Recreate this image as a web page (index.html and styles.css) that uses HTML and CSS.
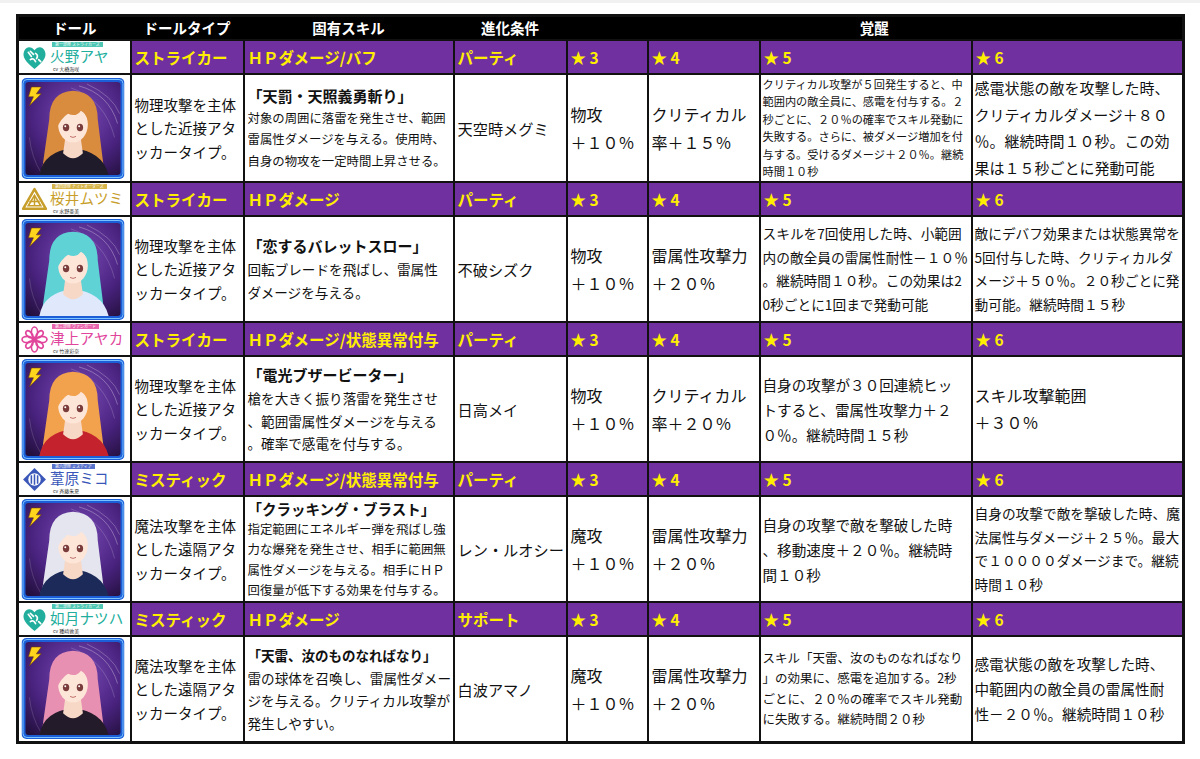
FILE: index.html
```html
<!DOCTYPE html>
<html lang="ja">
<head>
<meta charset="utf-8">
<title>ドール一覧</title>
<link rel="stylesheet" href="styles.css">
</head>
<body>
<div class="topbar"></div>
<svg class="defs" width="0" height="0" aria-hidden="true">
  <defs>
    <radialGradient id="bgGrad" cx="0.55" cy="0.35" r="0.8">
      <stop offset="0" stop-color="#7b4cb8"/>
      <stop offset="0.6" stop-color="#4a2380"/>
      <stop offset="1" stop-color="#24103f"/>
    </radialGradient>
    <symbol id="portrait" viewBox="0 0 104 102">
      <rect x="0" y="0" width="104" height="102" rx="5" fill="#1b5ed8"/>
      <rect x="1.5" y="1.5" width="101" height="99" rx="4" fill="none" stroke="#7cc4ff" stroke-width="1"/>
      <rect x="4" y="4" width="96" height="94" rx="3" fill="url(#bgGrad)"/>
      <path d="M58 8 Q88 16 97 46" stroke="#ffffff" stroke-opacity=".3" fill="none"/>
      <path d="M66 6 Q92 18 99 36" stroke="#ffffff" stroke-opacity=".25" fill="none"/>
      <path d="M50 10 Q84 22 94 60" stroke="#ffffff" stroke-opacity=".18" fill="none"/>
      <path d="M8 60 Q10 80 20 96" stroke="#ffffff" stroke-opacity=".15" fill="none"/>
      <path fill="currentColor" d="M28 42 Q28 14 52 13 Q77 14 77 42 L84 98 L20 98 Z"/>
      <path d="M18 98 Q22 74 52 71 Q82 74 88 98 Z"/>
      <path d="M44 62 L60 62 L62 76 Q52 86 42 76 Z" fill="#f7d8c6"/>
      <ellipse cx="52" cy="47" rx="15" ry="18" fill="#fde6d8"/>
      <ellipse cx="45" cy="50" rx="3.2" ry="3.8" fill="#7a3b3b"/>
      <ellipse cx="59" cy="50" rx="3.2" ry="3.8" fill="#7a3b3b"/>
      <circle cx="44.2" cy="48.8" r="1" fill="#ffffff"/>
      <circle cx="58.2" cy="48.8" r="1" fill="#ffffff"/>
      <path d="M49 59 Q52 61 55 59" stroke="#c0706a" stroke-width="1" fill="none"/>
      <path fill="currentColor" d="M35 52 Q31 20 52 19 Q74 20 70 52 Q67 36 60 33 Q55 40 47 36 Q40 40 35 52 Z"/>
      <path d="M10 9 L20 9 L15 16 L20 16 L8 28 L12 19 L7 19 Z" fill="#ffd41c" stroke="#6b3a00" stroke-width=".6"/>
    </symbol>
  </defs>
</svg>

<table class="dolls">
  <colgroup>
    <col class="c-doll"><col class="c-type"><col class="c-skill"><col class="c-evo">
    <col class="c-s3"><col class="c-s4"><col class="c-s5"><col class="c-s6">
  </colgroup>
  <thead>
    <tr class="hdr">
      <th>ドール</th><th>ドールタイプ</th><th>固有スキル</th><th>進化条件</th><th colspan="4">覚醒</th>
    </tr>
  </thead>
  <tbody>
    <!-- 1 火野アヤ -->
    <tr class="namerow">
      <td class="name-cell">
        <div class="tag teal">
          <svg class="logo" viewBox="0 0 26 26"><path d="M13 24 C4 17 1 12 3 7 C5 2 10 2 13 6 C16 2 21 2 23 7 C25 12 22 17 13 24 Z" fill="currentColor"/><path d="M7 8 L10 12 M9 7 L12 10 M14 9 Q17 11 15 14 M9 15 Q12 13 14 17 M17 15 L19 17" stroke="#fff" stroke-width="1.6" fill="none" stroke-linecap="round"/></svg>
          <div class="tag-text"><span class="unit">第一部隊 ストライカーズ</span><span class="doll">火野アヤ</span><span class="cv">cv 大橋海咲</span></div>
        </div>
      </td>
      <td>ストライカー</td><td>ＨＰダメージ/バフ</td><td>パーティ</td>
      <td>★ 3</td><td>★ 4</td><td>★ 5</td><td>★ 6</td>
    </tr>
    <tr class="bodyrow">
      <td class="pic"><svg class="portrait p1" viewBox="0 0 104 102"><use href="#portrait"/></svg></td>
      <td class="typedesc">物理攻撃を主体<br>とした近接アタ<br>ッカータイプ。</td>
      <td class="skill"><div class="title">「天罰・天照義勇斬り」</div><div class="desc d-sm">対象の周囲に落雷を発生させ、範囲<br>雷属性ダメージを与える。使用時、<br>自身の物攻を一定時間上昇させる。</div></td>
      <td class="evo">天空時メグミ</td>
      <td class="stat">物攻<br>＋１０％</td>
      <td class="stat">クリティカル<br>率＋１５％</td>
      <td class="awk a11">クリティカル攻撃が５回発生すると、中<br>範囲内の敵全員に、感電を付与する。２<br>秒ごとに、２０％の確率でスキル発動に<br>失敗する。さらに、被ダメージ増加を付<br>与する。受けるダメージ＋２０％。継続<br>時間１０秒</td>
      <td class="awk a15">感電状態の敵を攻撃した時、<br>クリティカルダメージ＋８０<br>％。継続時間１０秒。この効<br>果は１５秒ごとに発動可能</td>
    </tr>

    <!-- 2 桜井ムツミ -->
    <tr class="namerow">
      <td class="name-cell">
        <div class="tag gold">
          <svg class="logo" viewBox="0 0 26 26"><path d="M13 3 L24 22 L2 22 Z" fill="none" stroke="currentColor" stroke-width="2.4" stroke-linejoin="round"/><path d="M13 9 L19 19 L7 19 Z" fill="none" stroke="currentColor" stroke-width="1.6"/><path d="M13 9 L13 19 M8 15 L18 15" stroke="currentColor" stroke-width="1.4"/></svg>
          <div class="tag-text"><span class="unit">第四部隊 ナイトオーダーズ</span><span class="doll">桜井ムツミ</span><span class="cv">cv 水野亜美</span></div>
        </div>
      </td>
      <td>ストライカー</td><td>ＨＰダメージ</td><td>パーティ</td>
      <td>★ 3</td><td>★ 4</td><td>★ 5</td><td>★ 6</td>
    </tr>
    <tr class="bodyrow">
      <td class="pic"><svg class="portrait p2" viewBox="0 0 104 102"><use href="#portrait"/></svg></td>
      <td class="typedesc">物理攻撃を主体<br>とした近接アタ<br>ッカータイプ。</td>
      <td class="skill"><div class="title">「恋するバレットスロー」</div><div class="desc d-md">回転ブレードを飛ばし、雷属性<br>ダメージを与える。</div></td>
      <td class="evo">不破シズク</td>
      <td class="stat">物攻<br>＋１０％</td>
      <td class="stat">雷属性攻撃力<br>＋２０％</td>
      <td class="awk a13">スキルを7回使用した時、小範囲<br>内の敵全員の雷属性耐性－１０％<br>。継続時間１０秒。この効果は2<br>0秒ごとに1回まで発動可能</td>
      <td class="awk a13">敵にデバフ効果または状態異常を<br>5回付与した時、クリティカルダ<br>メージ＋５０％。２０秒ごとに発<br>動可能。継続時間１５秒</td>
    </tr>

    <!-- 3 津上アヤカ -->
    <tr class="namerow">
      <td class="name-cell">
        <div class="tag pink">
          <svg class="logo" viewBox="0 0 26 26"><g fill="none" stroke="currentColor" stroke-width="1.6"><ellipse cx="13" cy="6" rx="3" ry="5"/><ellipse cx="13" cy="20" rx="3" ry="5"/><ellipse cx="6" cy="13" rx="5" ry="3"/><ellipse cx="20" cy="13" rx="5" ry="3"/><ellipse cx="8" cy="8" rx="2.4" ry="4" transform="rotate(-45 8 8)"/><ellipse cx="18" cy="18" rx="2.4" ry="4" transform="rotate(-45 18 18)"/><ellipse cx="18" cy="8" rx="2.4" ry="4" transform="rotate(45 18 8)"/><ellipse cx="8" cy="18" rx="2.4" ry="4" transform="rotate(45 8 18)"/></g><circle cx="13" cy="13" r="2.5" fill="currentColor"/></svg>
          <div class="tag-text"><span class="unit">第三部隊 ヴァンガード</span><span class="doll">津上アヤカ</span><span class="cv">cv 竹達彩奈</span></div>
        </div>
      </td>
      <td>ストライカー</td><td>ＨＰダメージ/状態異常付与</td><td>パーティ</td>
      <td>★ 3</td><td>★ 4</td><td>★ 5</td><td>★ 6</td>
    </tr>
    <tr class="bodyrow">
      <td class="pic"><svg class="portrait p3" viewBox="0 0 104 102"><use href="#portrait"/></svg></td>
      <td class="typedesc">物理攻撃を主体<br>とした近接アタ<br>ッカータイプ。</td>
      <td class="skill"><div class="title">「電光ブザービーター」</div><div class="desc d-md">槍を大きく振り落雷を発生させ<br>、範囲雷属性ダメージを与える<br>。確率で感電を付与する。</div></td>
      <td class="evo">日高メイ</td>
      <td class="stat">物攻<br>＋１０％</td>
      <td class="stat">クリティカル<br>率＋２０％</td>
      <td class="awk a14">自身の攻撃が３０回連続ヒッ<br>トすると、雷属性攻撃力＋２<br>０％。継続時間１５秒</td>
      <td class="awk a16">スキル攻撃範囲<br>＋３０％</td>
    </tr>

    <!-- 4 葦原ミコ -->
    <tr class="namerow">
      <td class="name-cell">
        <div class="tag blue">
          <svg class="logo" viewBox="0 0 26 26"><path d="M13 2 L24 13 L13 24 L2 13 Z" fill="currentColor"/><circle cx="13" cy="13" r="6" fill="#fff"/><path d="M10 9 L10 17 M13 8 L13 18 M16 9 L16 17" stroke="currentColor" stroke-width="1.5"/></svg>
          <div class="tag-text"><span class="unit">第六部隊 ミスティア</span><span class="doll">葦原ミコ</span><span class="cv">cv 斉藤朱夏</span></div>
        </div>
      </td>
      <td>ミスティック</td><td>ＨＰダメージ/状態異常付与</td><td>パーティ</td>
      <td>★ 3</td><td>★ 4</td><td>★ 5</td><td>★ 6</td>
    </tr>
    <tr class="bodyrow">
      <td class="pic"><svg class="portrait p4" viewBox="0 0 104 102"><use href="#portrait"/></svg></td>
      <td class="typedesc">魔法攻撃を主体<br>とした遠隔アタ<br>ッカータイプ。</td>
      <td class="skill"><div class="title t-md">「クラッキング・ブラスト」</div><div class="desc d-xs">指定範囲にエネルギー弾を飛ばし強<br>力な爆発を発生させ、相手に範囲無<br>属性ダメージを与える。相手にＨＰ<br>回復量が低下する効果を付与する。</div></td>
      <td class="evo">レン・ルオシー</td>
      <td class="stat">魔攻<br>＋１０％</td>
      <td class="stat">雷属性攻撃力<br>＋２０％</td>
      <td class="awk a14">自身の攻撃で敵を撃破した時<br>、移動速度＋２０％。継続時<br>間１０秒</td>
      <td class="awk a13">自身の攻撃で敵を撃破した時、魔<br>法属性与ダメージ＋２５％。最大<br>で１００００ダメージまで。継続<br>時間１０秒</td>
    </tr>

    <!-- 5 如月ナツハ -->
    <tr class="namerow">
      <td class="name-cell">
        <div class="tag teal">
          <svg class="logo" viewBox="0 0 26 26"><path d="M13 24 C4 17 1 12 3 7 C5 2 10 2 13 6 C16 2 21 2 23 7 C25 12 22 17 13 24 Z" fill="currentColor"/><path d="M7 8 L10 12 M9 7 L12 10 M14 9 Q17 11 15 14 M9 15 Q12 13 14 17 M17 15 L19 17" stroke="#fff" stroke-width="1.6" fill="none" stroke-linecap="round"/></svg>
          <div class="tag-text"><span class="unit">第二部隊 ストライカーズ</span><span class="doll">如月ナツハ</span><span class="cv">cv 種﨑敦美</span></div>
        </div>
      </td>
      <td>ミスティック</td><td>ＨＰダメージ</td><td>サポート</td>
      <td>★ 3</td><td>★ 4</td><td>★ 5</td><td>★ 6</td>
    </tr>
    <tr class="bodyrow">
      <td class="pic"><svg class="portrait p5" viewBox="0 0 104 102"><use href="#portrait"/></svg></td>
      <td class="typedesc">魔法攻撃を主体<br>とした遠隔アタ<br>ッカータイプ。</td>
      <td class="skill"><div class="title t-sm">「天雷、汝のものなればなり」</div><div class="desc d-md">雷の球体を召喚し、雷属性ダメー<br>ジを与える。クリティカル攻撃が<br>発生しやすい。</div></td>
      <td class="evo">白波アマノ</td>
      <td class="stat">魔攻<br>＋１０％</td>
      <td class="stat">雷属性攻撃力<br>＋２０％</td>
      <td class="awk a12">スキル「天雷、汝のものなればなり<br>」の効果に、感電を追加する。2秒<br>ごとに、２０％の確率でスキル発動<br>に失敗する。継続時間２０秒</td>
      <td class="awk a14">感電状態の敵を攻撃した時、<br>中範囲内の敵全員の雷属性耐<br>性－２０％。継続時間１０秒</td>
    </tr>
  </tbody>
</table>
</body>
</html>
```

FILE: styles.css
```css
html, body {
  margin: 0;
  padding: 0;
  background: #ffffff;
}

body {
  font-family: "Noto Sans CJK JP", "Noto Sans", sans-serif;
  color: #111111;
}

.topbar {
  height: 3px;
  background: #f1f1f1;
}

.defs {
  display: block;
  width: 0;
  height: 0;
  overflow: hidden;
}

.dolls {
  margin: 11px 0 0 16px;
  width: 1166px;
  table-layout: fixed;
  border-collapse: collapse;
  border: 3px solid #111111;
}

.c-doll { width: 113px; }
.c-type { width: 113px; }
.c-skill { width: 210px; }
.c-evo { width: 113px; }
.c-s3 { width: 81px; }
.c-s4 { width: 112px; }
.c-s5 { width: 212px; }
.c-s6 { width: 212px; }

.dolls td {
  border: 2px solid #111111;
  padding: 0 2px 0 3px;
  vertical-align: middle;
  white-space: nowrap;
  overflow: hidden;
}

/* header */
.hdr {
  height: 24px;
  background: #000000;
}

.hdr th {
  color: #ffffff;
  font-size: 14.5px;
  font-weight: 700;
  text-align: center;
  padding: 0;
  line-height: 22px;
  border: none;
}

/* purple name rows */
.namerow {
  height: 34px;
  background: #7030a0;
}

.namerow td {
  color: #ffee00;
  font-size: 15.5px;
  font-weight: 700;
  line-height: 20px;
}

.namerow td.name-cell {
  background: #ffffff;
  padding: 0 2px;
}

.tag {
  display: flex;
  align-items: center;
  gap: 2px;
  height: 32px;
}

.logo {
  width: 27px;
  height: 27px;
  flex: none;
}

.tag-text {
  display: flex;
  flex-direction: column;
  align-items: flex-start;
}

.unit {
  font-size: 4px;
  line-height: 5px;
  height: 5px;
  color: #ffffff;
  padding: 0 3px;
  margin-left: 2px;
  font-weight: 400;
  overflow: hidden;
}

.doll {
  font-size: 14.5px;
  font-weight: 400;
  line-height: 18px;
  letter-spacing: 0.2px;
}

.cv {
  font-size: 5px;
  line-height: 6px;
  color: #333333;
  font-weight: 400;
  margin-top: 1px;
  margin-left: 3px;
}

.teal { color: #22ae9c; }
.teal .unit { background: #4fc7b4; }
.gold { color: #c89e2a; }
.gold .unit { background: #d6b54a; }
.pink { color: #e0449b; }
.pink .unit { background: #e866ad; }
.blue { color: #3a56b8; }
.blue .unit { background: #5a74cc; }

/* body rows */
.bodyrow {
  height: 106px;
  background: #ffffff;
}

.dolls td.pic {
  padding: 0 0 0 2px;
  line-height: 0;
}

.portrait {
  display: block;
  width: 104px;
  height: 101px;
}

.p1 { color: #d98b3e; fill: #1f1b2b; }
.p2 { color: #5fd2d6; fill: #dfe9fb; }
.p3 { color: #f2a24c; fill: #c4232e; }
.p4 { color: #e4e5ee; fill: #1b2a58; }
.p5 { color: #e890b2; fill: #231a2a; }

.typedesc {
  font-size: 14.5px;
  line-height: 23.5px;
}

.skill .title {
  font-size: 15px;
  font-weight: 700;
  line-height: 24px;
}

.skill .t-md { font-size: 14.5px; line-height: 21px; }
.skill .t-sm { font-size: 13.5px; }

.d-sm {
  font-size: 12.4px;
  line-height: 21.5px;
}

.d-xs {
  font-size: 12.4px;
  line-height: 20.5px;
}

.d-md {
  font-size: 13.6px;
  line-height: 22.8px;
}

.evo {
  font-size: 15.2px;
}

.stat {
  font-size: 16px;
  line-height: 28px;
}

.a11 { font-size: 11.2px; line-height: 17.5px; }
.a12 { font-size: 12.5px; line-height: 20.5px; }
.a13 { font-size: 13.7px; line-height: 23.5px; }
.a14 { font-size: 14.6px; line-height: 25px; }
.a15 { font-size: 15px; line-height: 26.5px; }
.a16 { font-size: 16px; line-height: 27px; }

.dolls td.awk {
  padding: 0 1px 0 2px;
}
```
